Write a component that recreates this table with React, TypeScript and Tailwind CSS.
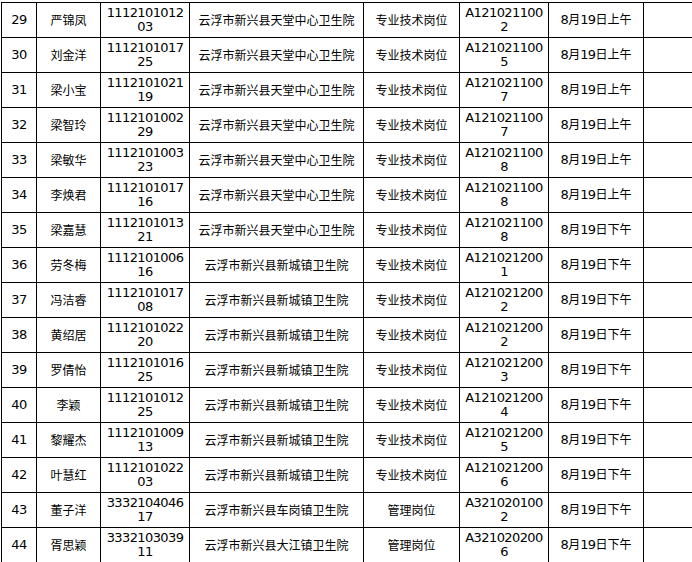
import React from 'react';

type Row = {
  no: number;
  name: string;
  id: [string, string];
  unit: string;
  post: string;
  code: [string, string];
  half: '上午' | '下午';
};

const TT = '云浮市新兴县天堂中心卫生院';
const XC = '云浮市新兴县新城镇卫生院';
const TECH = '专业技术岗位';

const ROWS: Row[] = [
  { no: 29, name: '严锦凤', id: ['1112101012', '03'], unit: TT, post: TECH, code: ['A121021100', '2'], half: '上午' },
  { no: 30, name: '刘金洋', id: ['1112101017', '25'], unit: TT, post: TECH, code: ['A121021100', '5'], half: '上午' },
  { no: 31, name: '梁小宝', id: ['1112101021', '19'], unit: TT, post: TECH, code: ['A121021100', '7'], half: '上午' },
  { no: 32, name: '梁智玲', id: ['1112101002', '29'], unit: TT, post: TECH, code: ['A121021100', '7'], half: '上午' },
  { no: 33, name: '梁敏华', id: ['1112101003', '23'], unit: TT, post: TECH, code: ['A121021100', '8'], half: '上午' },
  { no: 34, name: '李焕君', id: ['1112101017', '16'], unit: TT, post: TECH, code: ['A121021100', '8'], half: '上午' },
  { no: 35, name: '梁嘉慧', id: ['1112101013', '21'], unit: TT, post: TECH, code: ['A121021100', '8'], half: '下午' },
  { no: 36, name: '劳冬梅', id: ['1112101006', '16'], unit: XC, post: TECH, code: ['A121021200', '1'], half: '下午' },
  { no: 37, name: '冯洁睿', id: ['1112101017', '08'], unit: XC, post: TECH, code: ['A121021200', '2'], half: '下午' },
  { no: 38, name: '黄绍居', id: ['1112101022', '20'], unit: XC, post: TECH, code: ['A121021200', '2'], half: '下午' },
  { no: 39, name: '罗倩怡', id: ['1112101016', '25'], unit: XC, post: TECH, code: ['A121021200', '3'], half: '下午' },
  { no: 40, name: '李颖', id: ['1112101012', '25'], unit: XC, post: TECH, code: ['A121021200', '4'], half: '下午' },
  { no: 41, name: '黎耀杰', id: ['1112101009', '13'], unit: XC, post: TECH, code: ['A121021200', '5'], half: '下午' },
  { no: 42, name: '叶慧红', id: ['1112101022', '03'], unit: XC, post: TECH, code: ['A121021200', '6'], half: '下午' },
  { no: 43, name: '董子洋', id: ['3332104046', '17'], unit: '云浮市新兴县车岗镇卫生院', post: '管理岗位', code: ['A321020100', '2'], half: '下午' },
  { no: 44, name: '胥思颖', id: ['3332103039', '11'], unit: '云浮市新兴县大江镇卫生院', post: '管理岗位', code: ['A321020200', '6'], half: '下午' },
];

const num = "font-['DejaVu_Sans',sans-serif] text-[13px] tracking-[-0.6px]";
const cell = 'border border-black p-0 text-center align-middle';

const TwoLine: React.FC<{ lines: [string, string] }> = ({ lines }) => (
  <div className={`${num} leading-[14px]`}>
    {lines[0]}
    <br />
    {lines[1]}
  </div>
);

export default function App() {
  return (
    <div className="w-[692px] h-[562px] overflow-hidden bg-white text-black font-['Noto_Sans_CJK_SC',sans-serif] text-[12px]">
      <table className="ml-[1px] mt-[2px] table-fixed border-collapse w-[691px]">
        <colgroup>
          <col className="w-[35px]" />
          <col className="w-[64px]" />
          <col className="w-[89px]" />
          <col className="w-[174px]" />
          <col className="w-[96px]" />
          <col className="w-[89px]" />
          <col className="w-[95px]" />
          <col className="w-[49px]" />
        </colgroup>
        <tbody>
          {ROWS.map((r) => (
            <tr key={r.no} className="h-[35px]">
              <td className={cell}>
                <span className={num}>{r.no}</span>
              </td>
              <td className={cell}>{r.name}</td>
              <td className={cell}>
                <TwoLine lines={r.id} />
              </td>
              <td className={cell}>{r.unit}</td>
              <td className={cell}>{r.post}</td>
              <td className={cell}>
                <TwoLine lines={r.code} />
              </td>
              <td className={cell}>
                <span className={num}>8</span>月<span className={num}>19</span>日{r.half}
              </td>
              <td className={cell}></td>
            </tr>
          ))}
        </tbody>
      </table>
    </div>
  );
}
